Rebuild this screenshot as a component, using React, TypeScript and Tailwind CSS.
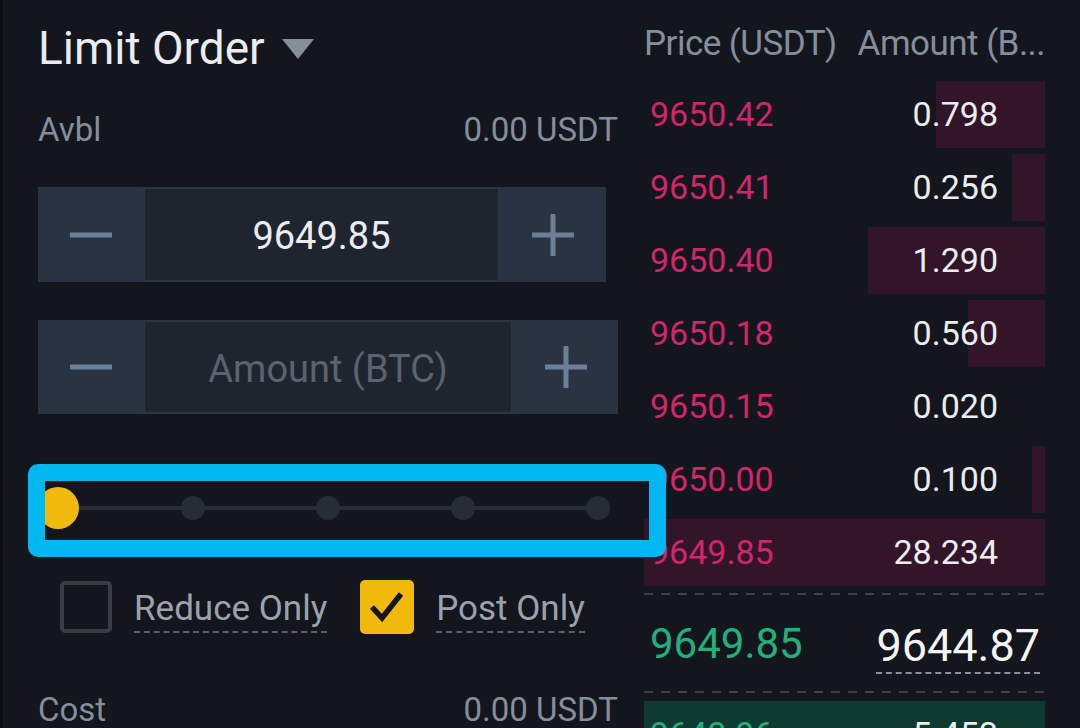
import { memo } from "react";

interface BookRow {
  price: string;
  amount: string;
  depth: number;
}

const asks: BookRow[] = [
  { price: "9650.42", amount: "0.798", depth: 109 },
  { price: "9650.41", amount: "0.256", depth: 33 },
  { price: "9650.40", amount: "1.290", depth: 177 },
  { price: "9650.18", amount: "0.560", depth: 77 },
  { price: "9650.15", amount: "0.020", depth: 0 },
  { price: "9650.00", amount: "0.100", depth: 13 },
  { price: "9649.85", amount: "28.234", depth: 401 },
];

function MinusIcon() {
  return (
    <svg width="44" height="44" viewBox="0 0 44 44">
      <rect x="1" y="19.5" width="42" height="5" fill="#6a8098" />
    </svg>
  );
}

function PlusIcon() {
  return (
    <svg width="44" height="44" viewBox="0 0 44 44">
      <rect x="1" y="19.5" width="42" height="5" fill="#6a8098" />
      <rect x="19.5" y="1" width="5" height="42" fill="#6a8098" />
    </svg>
  );
}

function Stepper({ value, placeholder, width, centerWidth }: { value?: string; placeholder?: string; width: string; centerWidth: string }) {
  return (
    <div className={`flex h-full ${width}`}>
      <div className="flex w-[105px] items-center justify-center bg-[#2a3341]">
        <MinusIcon />
      </div>
      <div
        className={`flex ${centerWidth} items-center justify-center border-2 border-[#2c3540] bg-[#1f252e] pt-[4px] text-[38px]`}
      >
        {value ? (
          <span className="text-[#eaecef]">{value}</span>
        ) : (
          <span className="text-[#5a6370]">{placeholder}</span>
        )}
      </div>
      <div className="flex flex-1 items-center justify-center bg-[#2a3341]">
        <PlusIcon />
      </div>
    </div>
  );
}

function Slider() {
  const dots = [135, 270, 405, 540];
  return (
    <div className="relative h-[93px]">
      <div className="absolute left-[20px] top-[42px] h-[4px] w-[540px] bg-[#272d36]" />
      {dots.map((x) => (
        <div
          key={x}
          className="absolute top-[32px] h-[24px] w-[24px] -translate-x-1/2 rounded-full bg-[#272d36]"
          style={{ left: 20 + x }}
        />
      ))}
      <div className="absolute left-[-1px] top-[23px] h-[42px] w-[42px] rounded-full bg-[#f0b90b]" />
      {/* highlight frame drawn over the slider */}
      <div className="absolute left-[-10px] top-0 z-10 h-[93px] w-[638px] rounded-[10px] border-[17px] border-[#00b8ef]" />
    </div>
  );
}

function CheckLabel({ label, checked }: { label: string; checked: boolean }) {
  return (
    <div className="flex items-center">
      {checked ? (
        <div className="flex h-[54px] w-[54px] shrink-0 items-center justify-center rounded-[5px] bg-[#f0b90b]">
          <svg width="42" height="42" viewBox="0 0 42 42">
            <path d="M6 21 L16 32 L35 8" fill="none" stroke="#14161a" strokeWidth="5.5" />
          </svg>
        </div>
      ) : (
        <div className="h-[52px] w-[52px] shrink-0 rounded-[5px] border-4 border-[#363d47]" />
      )}
      <span className="ml-[22px] mt-[8px] border-b-2 border-dashed border-[#5a626d] pb-[2px] text-[35px] leading-[40px] text-[#9ba2ad]">
        {label}
      </span>
    </div>
  );
}

function OrderForm() {
  return (
    <div className="w-[580px] shrink-0">
      <div className="mt-[22px] flex h-[52px] items-center">
        <span className="text-[46px] leading-[52px] text-[#eaecef]">Limit Order</span>
        <svg className="ml-[16px] mt-[2px]" width="34" height="24" viewBox="0 0 34 24">
          <path d="M1 2 H33 L17 22 Z" fill="#858e9b" />
        </svg>
      </div>
      <div className="mt-[36px] flex h-[40px] items-center justify-between text-[33px] text-[#848e9c]">
        <span>Avbl</span>
        <span>0.00 USDT</span>
      </div>
      <div className="mt-[37px] h-[95px]">
        <Stepper value="9649.85" width="w-[568px]" centerWidth="w-[357px]" />
      </div>
      <div className="mt-[38px] h-[94px]">
        <Stepper placeholder="Amount (BTC)" width="w-[580px]" centerWidth="w-[370px]" />
      </div>
      <div className="mt-[50px]">
        <Slider />
      </div>
      <div className="mt-[23px] flex h-[54px] items-center pl-[22px]">
        <CheckLabel label="Reduce Only" checked={false} />
        <div className="ml-[33px]">
          <CheckLabel label="Post Only" checked />
        </div>
      </div>
      <div className="mt-[56px] flex h-[40px] items-center justify-between text-[33px] text-[#848e9c]">
        <span>Cost</span>
        <span>0.00 USDT</span>
      </div>
    </div>
  );
}

function Dashes() {
  return (
    <div className="h-[2px] w-full bg-[repeating-linear-gradient(90deg,#3a414b_0_9px,transparent_9px_17px)]" />
  );
}

function OrderBook() {
  return (
    <div className="ml-[26px] w-[401px] shrink-0">
      <div className="mt-[24px] flex h-[40px] items-center justify-between whitespace-nowrap text-[35px] tracking-[-0.015em] text-[#848e9c]">
        <span>Price (USDT)</span>
        <span>Amount (B...</span>
      </div>
      <div className="mt-[17px] flex flex-col gap-[6px]">
        {asks.map((r) => (
          <div key={r.price} className="relative flex h-[67px] shrink-0 items-center justify-between">
            <div
              className="absolute bottom-0 right-0 top-0 bg-[#321529]"
              style={{ width: r.depth }}
            />
            <span className="relative pl-[6px] text-[34px] text-[#d4246b]">{r.price}</span>
            <span className="relative pr-[47px] text-[34px] text-[#eaecef]">{r.amount}</span>
          </div>
        ))}
      </div>
      <div className="mt-[7px]">
        <Dashes />
      </div>
      <div className="flex h-[96px] items-center justify-between">
        <span className="pl-[6px] text-[42px] text-[#21b07c]">9649.85</span>
        <span className="mr-[5px] mt-[8px] border-b-2 border-dashed border-[#8a919c] pb-[1px] text-[45px] leading-[50px] text-[#f5f5f5]">
          9644.87
        </span>
      </div>
      <Dashes />
      <div className="relative mt-[8px] flex h-[67px] items-center justify-between bg-[#0f3a31]">
        <span className="pl-[6px] text-[34px] text-[#21b07c]">9648.96</span>
        <span className="pr-[47px] text-[34px] text-[#eaecef]">5.453</span>
      </div>
    </div>
  );
}

function App() {
  return (
    <div className="flex h-[728px] w-[1080px] overflow-hidden border-l-[3px] border-[#0a0c0f] bg-[#13161d] pl-[35px] font-['Roboto',sans-serif]">
      <OrderForm />
      <OrderBook />
    </div>
  );
}

export default memo(App);
